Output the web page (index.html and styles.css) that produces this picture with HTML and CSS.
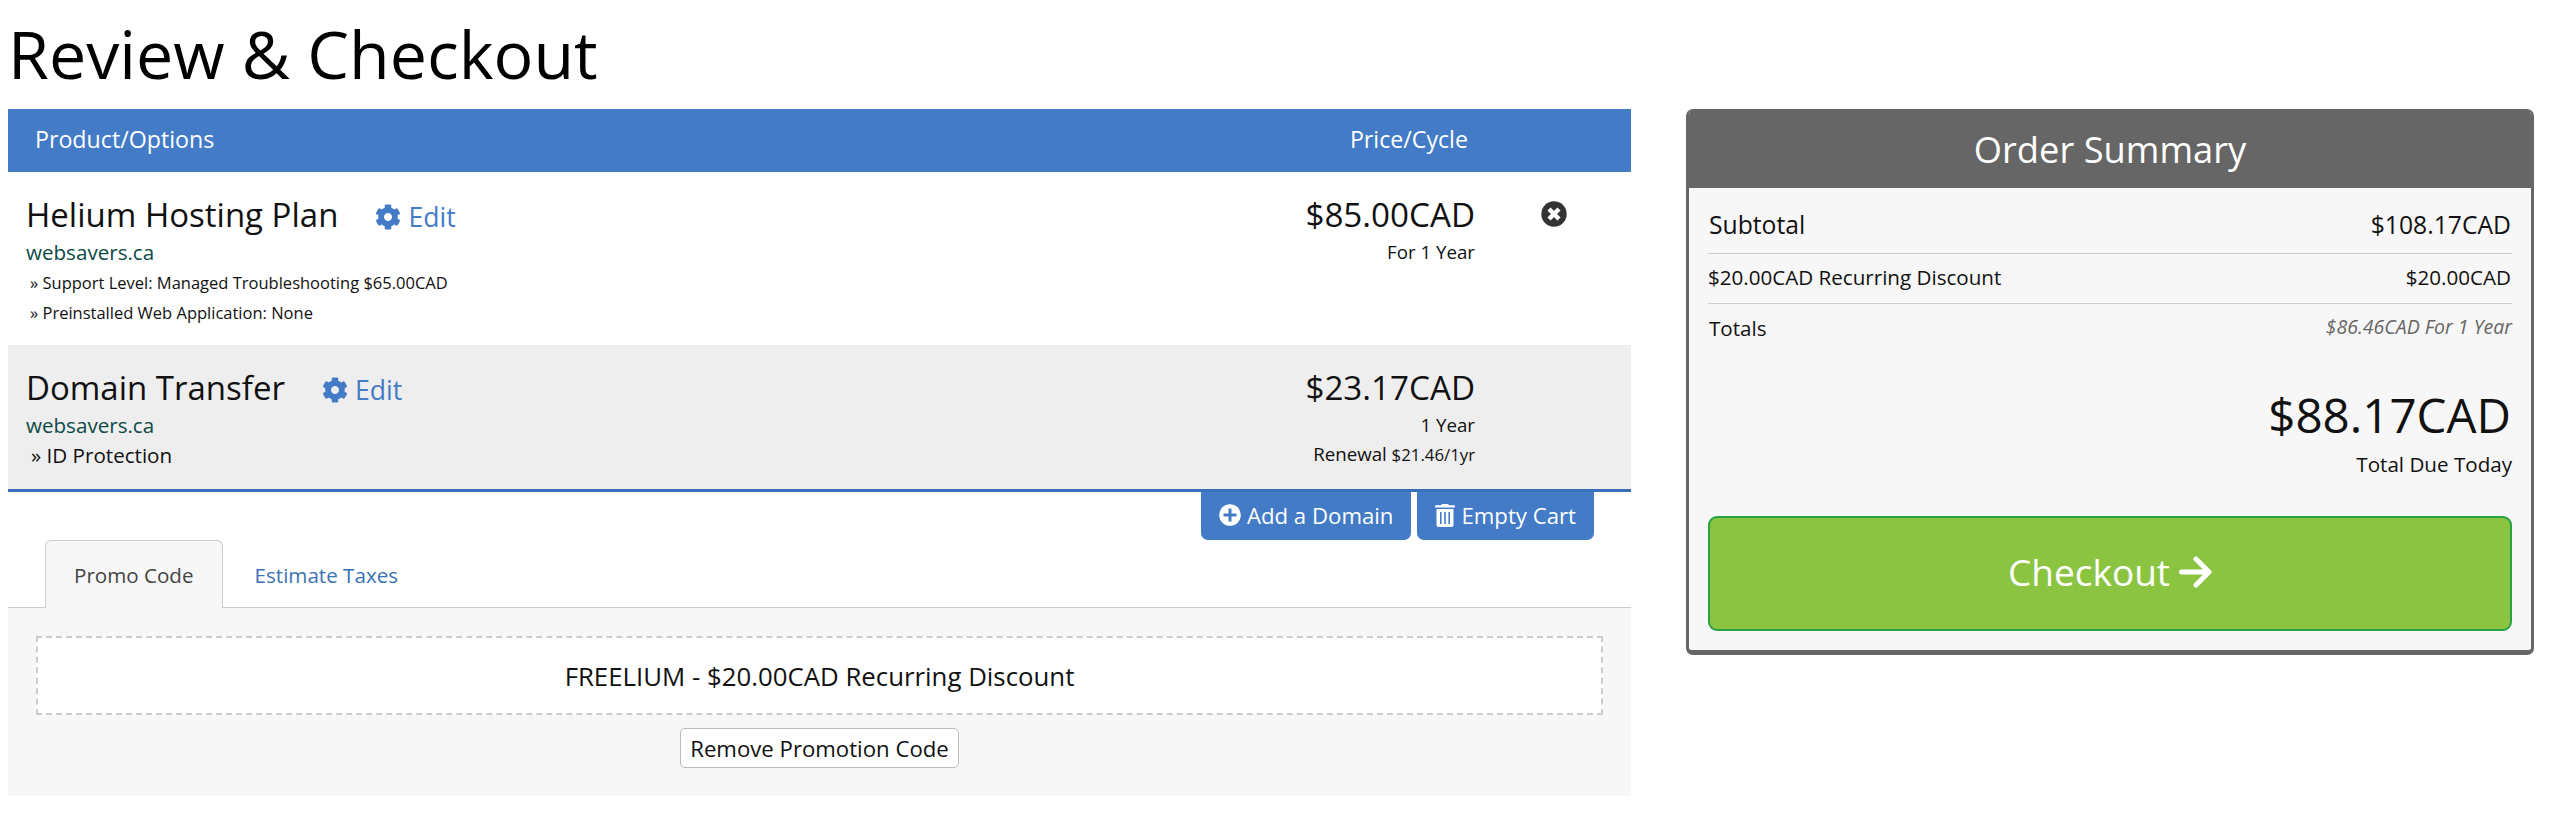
FILE: index.html
```html
<!doctype html>
<html lang="en">
    <head>
        <meta charset="utf-8">
        <title>Review &amp; Checkout</title>
        <!-- Style -->
        <link rel="stylesheet" href="styles.css">
    </head>
    <body>
        <!-- Icons -->
        <svg class="icon-defs">
            <symbol id="icon-cog" viewBox="0 0 512 512">
                <path d="M487.4 315.7l-42.6-24.6c4.3-23.2 4.3-47 0-70.2l42.6-24.6c4.9-2.8 7.1-8.6 5.5-14-11.1-35.6-30-67.8-54.7-94.6-3.8-4.1-10-5.1-14.8-2.3L380.8 110c-17.9-15.4-38.5-27.3-60.8-35.1V25.8c0-5.6-3.9-10.5-9.4-11.7-36.7-8.2-74.3-7.8-109.2 0-5.5 1.2-9.4 6.1-9.4 11.7V75c-22.2 7.9-42.8 19.8-60.8 35.1L88.7 85.5c-4.9-2.8-11-1.9-14.8 2.3-24.7 26.7-43.6 58.9-54.7 94.6-1.7 5.4.6 11.2 5.5 14L67.3 221c-4.3 23.2-4.3 47 0 70.2l-42.6 24.6c-4.9 2.8-7.1 8.6-5.5 14 11.1 35.6 30 67.8 54.7 94.6 3.8 4.1 10 5.1 14.8 2.3l42.6-24.6c17.9 15.4 38.5 27.3 60.8 35.1v49.2c0 5.6 3.9 10.5 9.4 11.7 36.7 8.2 74.3 7.8 109.2 0 5.5-1.2 9.4-6.1 9.4-11.7v-49.2c22.2-7.9 42.8-19.8 60.8-35.1l42.6 24.6c4.9 2.8 11 1.9 14.8-2.3 24.7-26.7 43.6-58.9 54.7-94.6 1.5-5.5-.7-11.3-5.6-14.1zM256 336c-44.1 0-80-35.9-80-80s35.9-80 80-80 80 35.9 80 80-35.9 80-80 80z"/>
            </symbol>
        </svg>

        <h1 class="page-title">Review &amp; Checkout</h1>

        <div class="checkout">
            <div class="cart">
                <div class="cart-header">
                    <span>Product/Options</span>
                    <span>Price/Cycle</span>
                </div>

                <!-- Items -->
                <div class="item">
                    <div class="item-info">
                        <div class="item-title">
                            <span class="item-name">Helium Hosting Plan</span>
                            <a class="edit"><svg class="cog"><use href="#icon-cog"/></svg>Edit</a>
                        </div>
                        <div class="item-domain">websavers.ca</div>
                        <div class="item-option">» Support Level: Managed Troubleshooting $65.00CAD</div>
                        <div class="item-option">» Preinstalled Web Application: None</div>
                    </div>
                    <div class="item-price">
                        <div class="amount">$85.00CAD</div>
                        <div class="cycle">For 1 Year</div>
                    </div>
                    <div class="item-remove">
                        <svg class="remove" viewBox="0 0 26 26">
                            <circle cx="13" cy="13" r="12.7" fill="#333"/>
                            <path d="M8 8l10 10M18 8l-10 10" stroke="#fff" stroke-width="4.4"/>
                        </svg>
                    </div>
                </div>
                <div class="item item-alt">
                    <div class="item-info">
                        <div class="item-title">
                            <span class="item-name">Domain Transfer</span>
                            <a class="edit"><svg class="cog"><use href="#icon-cog"/></svg>Edit</a>
                        </div>
                        <div class="item-domain">websavers.ca</div>
                        <div class="item-addon">» ID Protection</div>
                    </div>
                    <div class="item-price">
                        <div class="amount">$23.17CAD</div>
                        <div class="cycle">1 Year</div>
                        <div class="cycle">Renewal <span class="renewal">$21.46/1yr</span></div>
                    </div>
                    <div class="item-remove"></div>
                </div>

                <div class="cart-actions">
                    <a class="action">
                        <svg class="plus" viewBox="0 0 22 22">
                            <circle cx="11" cy="11" r="10.8" fill="#fff"/>
                            <path d="M11 4.5v13M4.5 11h13" stroke="#437bc7" stroke-width="3"/>
                        </svg>
                        Add a Domain
                    </a>
                    <a class="action">
                        <svg class="trash" viewBox="0 0 20 23" fill="#fff">
                            <path d="M6 1.2L7 0h6l1 1.2h5.3a.7.7 0 0 1 .7.7v1.6H0V1.9a.7.7 0 0 1 .7-.7z"/>
                            <path fill-rule="evenodd" d="M1.5 5h17v16a2 2 0 0 1-2 2h-13a2 2 0 0 1-2-2zM5 8v12h1.6V8zM9.2 8v12h1.6V8zM13.4 8v12H15V8z"/>
                        </svg>
                        Empty Cart
                    </a>
                </div>

                <!-- Promo code -->
                <div class="tabs">
                    <a class="tab active">Promo Code</a>
                    <a class="tab">Estimate Taxes</a>
                </div>
                <div class="tab-content">
                    <div class="promo">FREELIUM - $20.00CAD Recurring Discount</div>
                    <button class="remove-promo">Remove Promotion Code</button>
                </div>
            </div>

            <!-- Order summary -->
            <div class="summary">
                <h2 class="summary-title">Order Summary</h2>
                <div class="summary-body">
                    <div class="line subtotal">
                        <span>Subtotal</span>
                        <span>$108.17CAD</span>
                    </div>
                    <div class="line discount">
                        <span>$20.00CAD Recurring Discount</span>
                        <span>$20.00CAD</span>
                    </div>
                    <div class="line totals">
                        <span>Totals</span>
                        <span class="recurring">$86.46CAD For 1 Year</span>
                    </div>
                    <div class="due">$88.17CAD</div>
                    <div class="due-label">Total Due Today</div>
                    <button class="checkout-btn">
                        Checkout
                        <svg class="arrow" viewBox="0 0 33 32" fill="none" stroke="#fff" stroke-width="5" stroke-linecap="round" stroke-linejoin="round">
                            <path d="M2.5 16H29M17 3l13 13-13 13"/>
                        </svg>
                    </button>
                </div>
            </div>
        </div>
    </body>
</html>
```
FILE: styles.css
```css
* {
    box-sizing: border-box;
}

body {
    margin: 0;
    padding: 0 26px 0 8px;
    background-color: #fff;
    color: #111;
    font-family: "Open Sans", "Noto Sans", sans-serif;
    font-size: 20.6px;
}

.icon-defs {
    display: none;
}

.page-title {
    margin: 0 0 2px;
    color: #000;
    font-size: 66.3px;
    font-weight: 400;
    line-height: 107px;
}

.checkout {
    display: flex;
    align-items: flex-start;
    justify-content: space-between;
}

/* Cart */
.cart {
    width: 1623px;
}

.cart-header {
    display: flex;
    justify-content: space-between;
    height: 63px;
    padding: 0 163px 0 27px;
    background-color: #437bc7;
    color: #fff;
    font-size: 23.2px;
    line-height: 60px;
}

.item {
    display: flex;
    height: 173px;
    padding: 21px 0 0 18px;
}

.item-alt {
    height: 147px;
    background-color: #eee;
    border-bottom: 3px solid #3a6fba;
}

.item-info {
    flex: 1;
}

.item-title {
    display: flex;
    height: 44px;
    font-size: 33px;
    line-height: 44px;
}

.edit {
    display: flex;
    margin-left: 37px;
    color: #437bc7;
    font-size: 26.6px;
    line-height: 48px;
}

.cog {
    width: 26px;
    height: 26px;
    margin: 11px 7px 0 0;
    fill: #437bc7;
}

.item-domain {
    color: #0b4a46;
    line-height: 31px;
}

.item-option {
    padding-left: 4px;
    font-size: 16.5px;
    line-height: 30px;
}

.item-addon {
    padding-left: 5px;
    line-height: 28px;
}

.item-price {
    text-align: right;
}

.amount {
    font-size: 33.2px;
    line-height: 44px;
}

.cycle {
    font-size: 18.7px;
    line-height: 29px;
}

.renewal {
    font-size: 16.8px;
}

.item-remove {
    width: 156px;
    padding: 8px 0 0 66px;
}

.remove {
    display: block;
    width: 26px;
    height: 26px;
}

.cart-actions {
    display: flex;
    justify-content: flex-end;
    gap: 6px;
    padding-right: 37px;
}

.action {
    display: flex;
    height: 48px;
    padding: 0 18px;
    background-color: #437bc7;
    border-radius: 0 0 7px 7px;
    color: #fff;
    font-size: 22.2px;
    line-height: 47px;
}

.plus {
    width: 22px;
    height: 22px;
    margin: 12px 6px 0 0;
}

.trash {
    width: 20px;
    height: 23px;
    margin: 12px 6px 0 0;
}

/* Tabs */
.tabs {
    display: flex;
    gap: 3px;
    padding-left: 37px;
    border-bottom: 1px solid #ccc;
}

.tab {
    height: 68px;
    margin-bottom: -1px;
    padding: 0 28px;
    border: 1px solid transparent;
    border-bottom: none;
    border-radius: 6px 6px 0 0;
    color: #3a72b5;
    line-height: 68px;
}

.tab.active {
    background-color: #f7f7f7;
    border-color: #ccc;
    color: #444;
}

.tab-content {
    height: 188px;
    padding: 28px;
    background-color: #f7f7f7;
    text-align: center;
}

.promo {
    height: 79px;
    margin-bottom: 13px;
    background-color: #fff;
    border: 2px dashed #ccc;
    font-size: 25.8px;
    line-height: 77px;
}

.remove-promo {
    height: 40px;
    padding: 0 9px;
    background-color: #fff;
    border: 1px solid #bbb;
    border-radius: 5px;
    color: #111;
    font-family: inherit;
    font-size: 22.2px;
    line-height: 35px;
}

/* Order summary */
.summary {
    width: 848px;
    background-color: #f7f7f7;
    border: 3px solid #666;
    border-width: 0 3px 5px;
    border-radius: 7px;
    overflow: hidden;
}

.summary-title {
    height: 79px;
    margin: 0;
    background-color: #666;
    color: #fff;
    font-size: 36.3px;
    font-weight: 400;
    line-height: 80px;
    text-align: center;
}

.summary-body {
    padding: 14px 19px 19px;
}

.line {
    display: flex;
    justify-content: space-between;
    padding: 0 1px;
    border-bottom: 1px solid #ccc;
}

.subtotal {
    height: 52px;
    font-size: 24.7px;
    line-height: 45px;
}

.discount {
    height: 50px;
    padding-left: 0;
    line-height: 47px;
}

.totals {
    height: 72px;
    padding-right: 0;
    border: none;
    line-height: 48px;
}

.recurring {
    color: #666;
    font-size: 19.5px;
    font-style: italic;
    line-height: 45px;
}

.due {
    padding-right: 1px;
    font-size: 47.5px;
    line-height: 77px;
    text-align: right;
}

.due-label {
    margin-bottom: 40px;
    line-height: 23px;
    text-align: right;
}

.checkout-btn {
    display: flex;
    justify-content: center;
    align-items: center;
    gap: 9px;
    width: 100%;
    height: 115px;
    padding: 0 0 4px;
    background-color: #8bc441;
    border: 2px solid #27a243;
    border-radius: 9px;
    color: #fff;
    font-family: inherit;
    font-size: 37px;
}

.arrow {
    width: 33px;
    height: 32px;
}
```
